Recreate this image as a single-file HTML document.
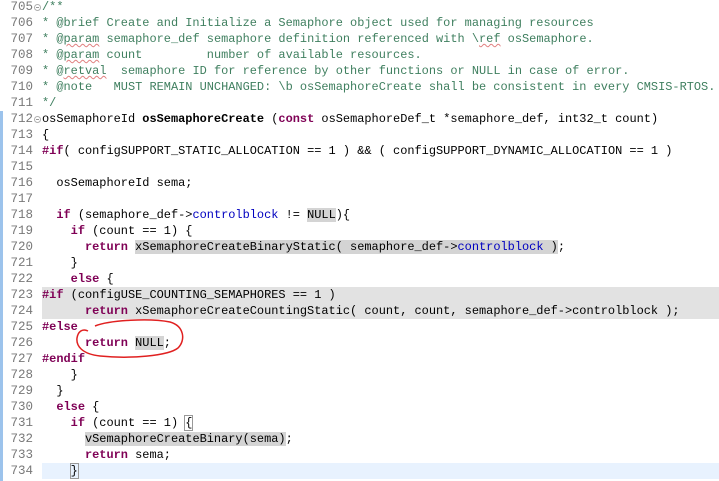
<!DOCTYPE html>
<html><head><meta charset="utf-8"><style>
body{margin:0;width:719px;height:481px;overflow:hidden;background:#fff;position:relative;font-family:"Liberation Mono",monospace;font-size:11.95px;}
.ln{position:absolute;left:0;width:33px;text-align:right;color:#787878;height:16px;line-height:16px;font-size:12.5px}
.l{position:absolute;left:42px;white-space:pre;height:16px;line-height:16px;color:#000;}
.c{color:#3f7f5f}.k{color:#7f0055;font-weight:bold}.f{color:#0000c0}.b{font-weight:bold}
.h{background:#d4d4d4}
.band{position:absolute;left:42px;right:0;height:16px}
.fold{position:absolute;left:34px;width:5px;height:5px;border:1px solid #b0b0b0;border-radius:50%;font-size:0;background:#fff}
.fold:after{content:"";position:absolute;left:1px;top:2px;width:3px;height:1px;background:#999}
.u{text-decoration:underline wavy #e08080;text-decoration-thickness:1px}
</style></head><body>
<div style="position:absolute;left:0;top:111px;width:3px;height:370px;background:#9cc3ec"></div>
<div class="band" style="top:287px;height:32px;background:#e2e2e2"></div>
<div class="band" style="top:463px;background:#e8f2fe"></div>

<div class="ln" style="top:-1px">705</div><div class="fold" style="top:4px"></div><div class="l c" style="top:-1px">/**</div>
<div class="ln" style="top:15px">706</div><div class="l c" style="top:15px">* @brief Create and Initialize a Semaphore object used for managing resources</div>
<div class="ln" style="top:31px">707</div><div class="l c" style="top:31px">* @<span class="u">param</span> semaphore_def semaphore definition referenced with \<span class="u">ref</span> osSemaphore.</div>
<div class="ln" style="top:47px">708</div><div class="l c" style="top:47px">* @<span class="u">param</span> count         number of available resources.</div>
<div class="ln" style="top:63px">709</div><div class="l c" style="top:63px">* @<span class="u">retval</span>  semaphore ID for reference by other functions or NULL in case of error.</div>
<div class="ln" style="top:79px">710</div><div class="l c" style="top:79px">* @note   MUST REMAIN UNCHANGED: \b osSemaphoreCreate shall be consistent in every CMSIS-RTOS.</div>
<div class="ln" style="top:95px">711</div><div class="l c" style="top:95px">*/</div>
<div class="ln" style="top:111px">712</div><div class="fold" style="top:116px"></div><div class="l" style="top:111px">osSemaphoreId <span class="b">osSemaphoreCreate</span> (<span class="k">const</span> osSemaphoreDef_t *semaphore_def, int32_t count)</div>
<div class="ln" style="top:127px">713</div><div class="l" style="top:127px">{</div>
<div class="ln" style="top:143px">714</div><div class="l" style="top:143px"><span class="k">#if</span>( configSUPPORT_STATIC_ALLOCATION == 1 ) &amp;&amp; ( configSUPPORT_DYNAMIC_ALLOCATION == 1 )</div>
<div class="ln" style="top:159px">715</div>
<div class="ln" style="top:175px">716</div><div class="l" style="top:175px">  osSemaphoreId sema;</div>
<div class="ln" style="top:191px">717</div>
<div class="ln" style="top:207px">718</div><div class="l" style="top:207px">  <span class="k">if</span> (semaphore_def-&gt;<span class="f">controlblock</span> != <span class="h">NULL</span>){</div>
<div class="ln" style="top:223px">719</div><div class="l" style="top:223px">    <span class="k">if</span> (count == 1) {</div>
<div class="ln" style="top:239px">720</div><div class="l" style="top:239px">      <span class="k">return</span> <span class="h">xSemaphoreCreateBinaryStatic( semaphore_def-&gt;<span class="f">controlblock</span> )</span>;</div>
<div class="ln" style="top:255px">721</div><div class="l" style="top:255px">    }</div>
<div class="ln" style="top:271px">722</div><div class="l" style="top:271px">    <span class="k">else</span> {</div>
<div class="ln" style="top:287px">723</div><div class="l" style="top:287px"><span class="k">#if</span> (configUSE_COUNTING_SEMAPHORES == 1 )</div>
<div class="ln" style="top:303px">724</div><div class="l" style="top:303px">      <span class="k">return</span> xSemaphoreCreateCountingStatic( count, count, semaphore_def-&gt;controlblock );</div>
<div class="ln" style="top:319px">725</div><div class="l" style="top:319px"><span class="k">#else</span></div>
<div class="ln" style="top:335px">726</div><div class="l" style="top:335px">      <span class="k">return</span> <span class="h">NULL</span>;</div>
<div class="ln" style="top:351px">727</div><div class="l" style="top:351px"><span class="k">#endif</span></div>
<div class="ln" style="top:367px">728</div><div class="l" style="top:367px">    }</div>
<div class="ln" style="top:383px">729</div><div class="l" style="top:383px">  }</div>
<div class="ln" style="top:399px">730</div><div class="l" style="top:399px">  <span class="k">else</span> {</div>
<div class="ln" style="top:415px">731</div><div class="l" style="top:415px">    <span class="k">if</span> (count == 1) <span style="outline:1px solid #999">{</span></div>
<div class="ln" style="top:431px">732</div><div class="l" style="top:431px">      <span class="h">vSemaphoreCreateBinary(sema)</span>;</div>
<div class="ln" style="top:447px">733</div><div class="l" style="top:447px">      <span class="k">return</span> sema;</div>
<div class="ln" style="top:463px">734</div><div class="l" style="top:463px">    <span style="outline:1px solid #999">}</span><span style="display:inline-block;width:1px;height:14px;background:#000;vertical-align:middle"></span></div>

<svg style="position:absolute;left:0;top:0" width="719" height="481"><path d="M95 326 C110 320,150 318,170 322 C184 326,186 340,178 348 C168 356,130 359,100 356 C82 354,76 346,77 338 C78 332,82 328,88 331" fill="none" stroke="#e02020" stroke-width="1.5"/></svg>
</body></html>
